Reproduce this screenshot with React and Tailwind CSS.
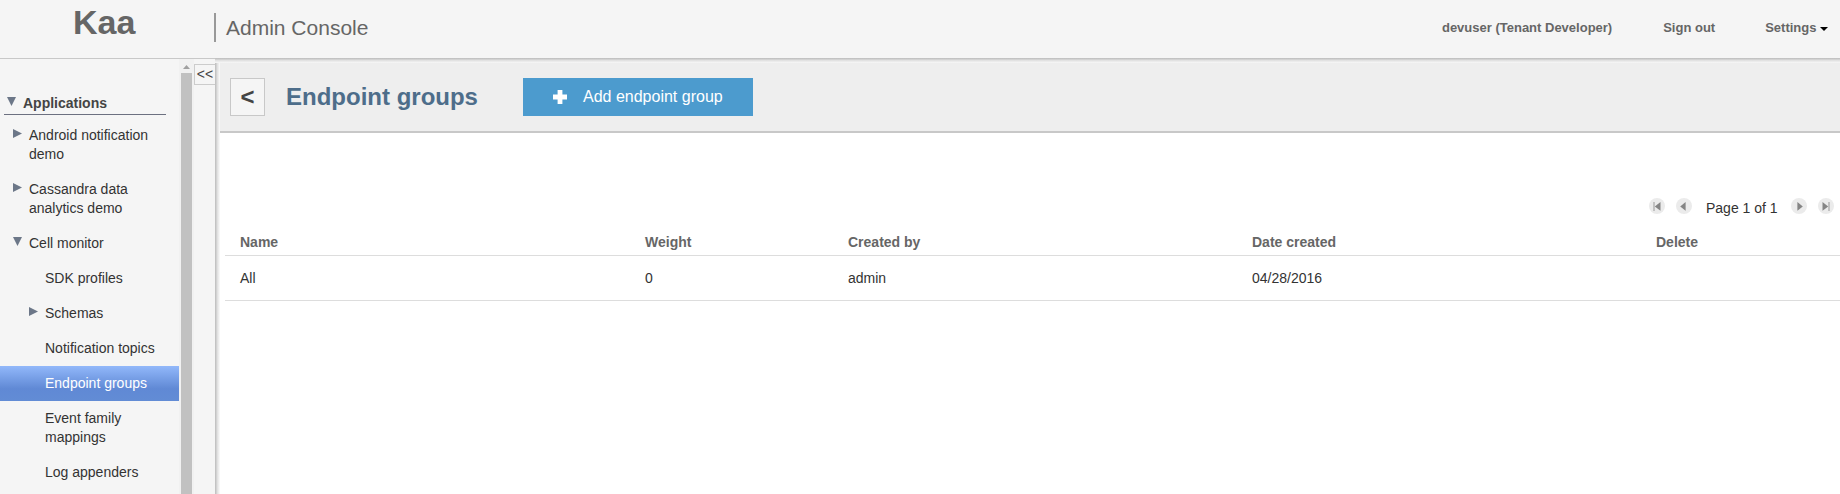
const treeItems = [
  { label: 'Android notification demo', arrow: 'right', level: 1 },
  { label: 'Cassandra data analytics demo', arrow: 'right', level: 1 },
  { label: 'Cell monitor', arrow: 'down', level: 1 },
  { label: 'SDK profiles', level: 2 },
  { label: 'Schemas', arrow: 'right', level: 2 },
  { label: 'Notification topics', level: 2 },
  { label: 'Endpoint groups', level: 2, selected: true },
  { label: 'Event family mappings', level: 2 },
  { label: 'Log appenders', level: 2 },
];

function Arrow({ dir, className = '' }) {
  return (
    <svg width="9" height="9" viewBox="0 0 9 9" className={`shrink-0 ${className}`} fill="#6c7788">
      {dir === 'down' && <path d="M0 0H9L4.5 9Z" />}
      {dir === 'right' && <path d="M0 0V9L9 4.5Z" />}
    </svg>
  );
}

function TreeItem({ item }) {
  const indent = item.level === 1 ? 'pl-[13px]' : 'pl-[29px]';
  const look = item.selected
    ? 'bg-linear-to-b from-[#92b8fa] via-[#6089d5] via-65% to-[#628cd5] text-white'
    : '';
  return (
    <li className={`flex py-2 pr-4 ${indent} ${look}`}>
      <Arrow dir={item.arrow} className="mt-[3px] mr-[7px]" />
      <span className="w-[122px] leading-[19px]">{item.label}</span>
    </li>
  );
}

function PagerButton({ kind }) {
  const left = kind === 'first' || kind === 'prev';
  const end = kind === 'first' || kind === 'last';
  return (
    <button className="size-4">
      <svg width="16" height="16" viewBox="0 0 16 16" className={left ? '' : '-scale-x-100'}>
        <circle cx="8" cy="8" r="8" fill="#ebebeb" />
        <path d={end ? 'M11.5 4V12.8L5.8 8.4Z' : 'M9.6 4V12.8L4.2 8.4Z'} fill="#858585" />
        {end && <path d="M5 4V13" stroke="#999" />}
      </svg>
    </button>
  );
}

export default function App() {
  return (
    <div className="flex h-[494px] w-full flex-col overflow-hidden bg-white font-['Liberation_Sans',Arial,sans-serif] text-sm text-[#333]">
      <header className="flex h-[58px] shrink-0 bg-[#f5f5f5] text-[#666]">
        <div className="w-[214px] pt-[3px] pl-[73px] text-[34px] leading-[39px] font-bold">Kaa</div>
        <div className="mt-[13px] h-[29px] border-l-2 border-[#999] pl-2.5 text-[21px] leading-[29px]">
          Admin Console
        </div>
        <nav className="ml-auto flex pt-5 pr-3 text-[13px] leading-[15px] font-bold">
          <span className="mr-[51px]">devuser (Tenant Developer)</span>
          <span className="mr-[50px]">Sign out</span>
          <span className="flex">
            Settings
            <svg width="8" height="4" viewBox="0 0 8 4" className="mt-[7px] ml-[3.5px]">
              <path d="M0 0H8L4 4Z" fill="#000" />
            </svg>
          </span>
        </nav>
      </header>

      <div className="flex min-h-0 flex-1">
        <aside className="flex w-[215px] shrink-0 border-t border-[#c8c8c8] bg-[#f5f5f5]">
          <div className="w-[179px] shrink-0 overflow-hidden pt-9">
            <div className="mb-[3px] ml-1 flex h-5 w-[162px] border-b border-[#6c7080] pl-[3px]">
              <Arrow dir="down" className="mt-0.5 mr-[7px]" />
              <span className="leading-[17px] font-bold text-[#444]">Applications</span>
            </div>
            <ul>
              {treeItems.map((item) => (
                <TreeItem key={item.label} item={item} />
              ))}
            </ul>
          </div>
          <div className="flex w-[15px] shrink-0 flex-col items-center bg-[#f1f1f1]">
            <svg width="7" height="4" viewBox="0 0 7 4" className="mt-1.5 mb-1 shrink-0">
              <path d="M0 4L3.5 0L7 4Z" fill="#a0a0a0" />
            </svg>
            <div className="w-[11px] flex-1 bg-[#c1c1c1]" />
          </div>
          <button className="mt-[5px] h-[21px] w-[21px] shrink-0 border border-r-0 border-[#ccc] text-center text-sm leading-[19px] text-[#444]">
            &lt;&lt;
          </button>
        </aside>

        <main className="flex min-w-0 flex-1 flex-col">
          <div className="h-[5px] shrink-0 bg-linear-to-b from-[#bbb] via-[#e2e2e2] via-50% to-[#f8f8f8]" />
          <div className="flex min-h-0 flex-1">
            <div className="w-[5px] shrink-0 bg-linear-to-r from-[#bbb] via-[#e2e2e2] via-50% to-[#fcfcfc]" />
            <div className="min-w-0 flex-1">
              <div className="flex h-[70px] border-b-2 border-[#c8c8c8] bg-[#eee] pt-[15px] pl-2.5">
                <button className="h-[38px] w-[35px] border border-[#c8c8c8] bg-[#f5f5f5] text-2xl leading-[36px] font-bold text-[#444]">
                  &lt;
                </button>
                <h1 className="ml-[21px] w-[237px] text-2xl leading-[38px] font-bold text-[#4d6d8a]">
                  Endpoint groups
                </h1>
                <button className="flex h-[38px] w-[230px] items-center bg-[#4c9bce] pl-[30px] text-base text-white">
                  <svg width="14" height="14" viewBox="0 0 14 14" className="mr-4">
                    <path d="M4.6 0H9.4V4.6H14V9.4H9.4V14H4.6V9.4H0V4.6H4.6Z" fill="#fff" />
                  </svg>
                  Add endpoint group
                </button>
              </div>

              <div className="flex h-[89px] justify-end pt-[65px] pr-1.5">
                <PagerButton kind="first" />
                <span className="ml-[11px]">
                  <PagerButton kind="prev" />
                </span>
                <span className="mt-0.5 ml-3.5 w-[85px] leading-4">Page 1 of 1</span>
                <PagerButton kind="next" />
                <span className="ml-[11px]">
                  <PagerButton kind="last" />
                </span>
              </div>

              <table className="ml-[5px] w-[1615px] table-fixed border-separate border-spacing-0 text-left">
                <thead className="text-[#666]">
                  <tr>
                    <th className="h-[34px] w-[405px] border-b border-[#ddd] pt-[6px] pl-[15px]">Name</th>
                    <th className="w-[203px] border-b border-[#ddd] pt-[6px] pl-[15px]">Weight</th>
                    <th className="w-[404px] border-b border-[#ddd] pt-[6px] pl-[15px]">Created by</th>
                    <th className="w-[404px] border-b border-[#ddd] pt-[6px] pl-[15px]">Date created</th>
                    <th className="border-b border-[#ddd] pt-[6px] pl-[15px]">Delete</th>
                  </tr>
                </thead>
                <tbody>
                  <tr>
                    <td className="h-[45px] border-b border-[#ddd] pl-[15px]">All</td>
                    <td className="border-b border-[#ddd] pl-[15px]">0</td>
                    <td className="border-b border-[#ddd] pl-[15px]">admin</td>
                    <td className="border-b border-[#ddd] pl-[15px]">04/28/2016</td>
                    <td className="border-b border-[#ddd] pl-[15px]" />
                  </tr>
                </tbody>
              </table>
            </div>
          </div>
        </main>
      </div>
    </div>
  );
}
